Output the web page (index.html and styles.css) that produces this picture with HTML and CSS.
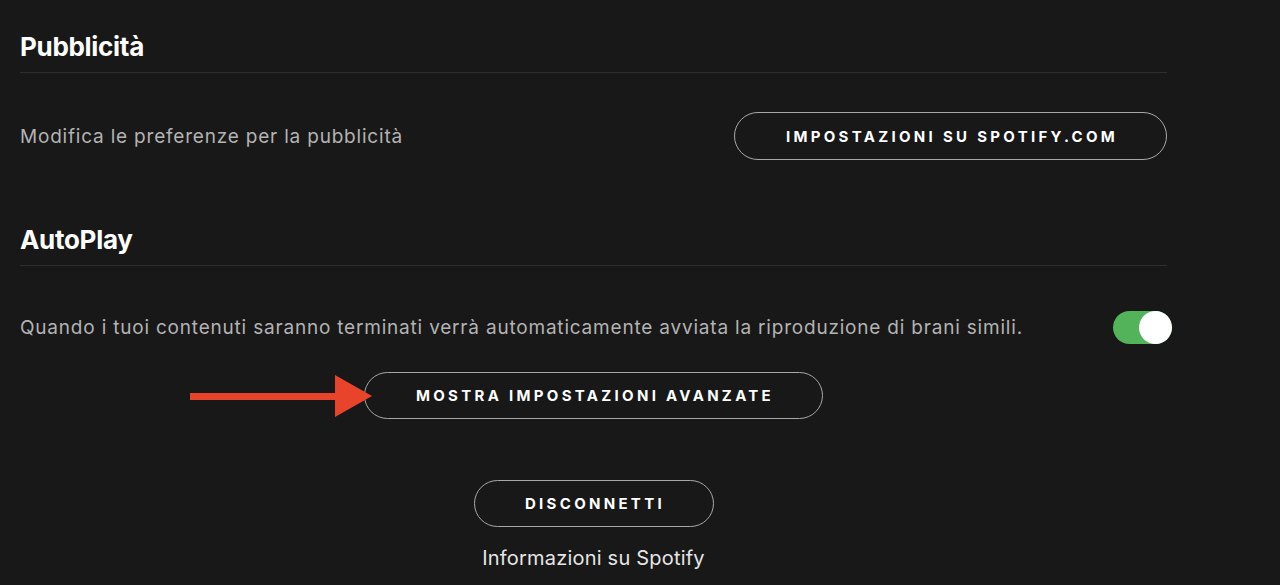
FILE: index.html
```html
<!DOCTYPE html>
<html lang="it">
<head>
<meta charset="utf-8">
<link rel="stylesheet" href="styles.css">
</head>
<body>
<main class="settings">
  <section class="section">
    <h2 class="section-title">Pubblicità</h2>
    <div class="row">
      <span class="row-label">Modifica le preferenze per la pubblicità</span>
      <button class="pill-btn">IMPOSTAZIONI SU SPOTIFY.COM</button>
    </div>
  </section>
  <section class="section section-autoplay">
    <h2 class="section-title">AutoPlay</h2>
    <div class="row">
      <span class="row-label">Quando i tuoi contenuti saranno terminati verrà automaticamente avviata la riproduzione di brani simili.</span>
      <span class="toggle"><span class="knob"></span></span>
    </div>
  </section>
  <div class="center-block advanced">
    <div class="advanced-wrap">
      <svg class="arrow" width="182" height="42" viewBox="0 0 182 42">
        <rect x="0" y="18" width="150" height="7" fill="#e8432b"/>
        <polygon points="145,0 182,21 145,42" fill="#e8432b"/>
      </svg>
      <button class="pill-btn wide">MOSTRA IMPOSTAZIONI AVANZATE</button>
    </div>
  </div>
  <div class="center-block logout">
    <button class="pill-btn small">DISCONNETTI</button>
    <a class="about">Informazioni su Spotify</a>
  </div>
</main>
</body>
</html>
```

FILE: styles.css
```css
html, body {
  margin: 0;
  padding: 0;
  background: #181818;
  height: 100%;
  overflow: hidden;
}
body {
  font-family: Inter, "Noto Sans", sans-serif;
  color: #fff;
}
.settings {
  width: 1147px;
  padding-left: 20px;
  padding-top: 31px;
}
.section-title {
  margin: 0;
  font-size: 26px;
  font-weight: 700;
  line-height: 32px;
  letter-spacing: -0.3px;
  padding-bottom: 9px;
  border-bottom: 1px solid #2e2e2e;
}
.row {
  display: flex;
  align-items: center;
  justify-content: space-between;
  margin-top: 39px;
}
.row-label {
  font-size: 19px;
  color: #b3b3b3;
  letter-spacing: 0.8px;
}
.pill-btn {
  font-family: Inter, "Noto Sans", sans-serif;
  background: transparent;
  color: #fff;
  border: 1px solid #a8a8a8;
  border-radius: 24px;
  height: 48px;
  width: 433px;
  font-size: 15px;
  font-weight: 700;
  letter-spacing: 3.3px;
  padding: 0 0 0 3px;
  cursor: pointer;
}
.pill-btn.wide { width: 459px; height: 47px; }
.pill-btn.small { width: 240px; height: 47px; }
.section-autoplay { margin-top: 64px; }
.section-autoplay .row { margin-top: 45px; }
.toggle {
  width: 59px;
  height: 33px;
  border-radius: 17px;
  background: #52b35a;
  display: flex;
  justify-content: flex-end;
  margin-right: -5px;
}
.knob {
  width: 33px;
  height: 33px;
  border-radius: 50%;
  background: #fff;
}
.center-block {
  display: flex;
  flex-direction: column;
  align-items: center;
}
.advanced { margin-top: 28px; }
.advanced-wrap {
  position: relative;
}
.arrow {
  position: absolute;
  left: -174px;
  top: 3px;
}
.logout { margin-top: 61px; }
.about {
  margin-top: 19px;
  font-size: 20px;
  color: #e6e6e6;
  letter-spacing: 0.2px;
}
```
